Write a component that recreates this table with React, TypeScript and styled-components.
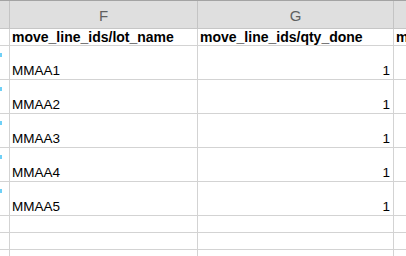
import styled, { createGlobalStyle } from "styled-components";

const GlobalStyle = createGlobalStyle`
  html, body {
    margin: 0;
    padding: 0;
    background: #ffffff;
    overflow: hidden;
  }
  body {
    font-family: "Liberation Sans", Arial, sans-serif;
  }
`;

const COLUMNS = "9px 187px 195px 40px";

interface Row {
  lot: string;
  qty: number;
}

const rows: Row[] = [
  { lot: "MMAA1", qty: 1 },
  { lot: "MMAA2", qty: 1 },
  { lot: "MMAA3", qty: 1 },
  { lot: "MMAA4", qty: 1 },
  { lot: "MMAA5", qty: 1 },
];

export default function App() {
  return (
    <Sheet>
      <GlobalStyle />
      <ColumnBar>
        <LetterCell />
        <LetterCell>F</LetterCell>
        <LetterCell>G</LetterCell>
        <LetterCell />
      </ColumnBar>
      <Grid>
        <RowHead />
        <HeadCell>move_line_ids/lot_name</HeadCell>
        <HeadCell>move_line_ids/qty_done</HeadCell>
        <HeadCell>m</HeadCell>

        {rows.map((r) => (
          <RowGroup key={r.lot}>
            <RowHead $tall>
              <Marker />
            </RowHead>
            <Cell $tall>{r.lot}</Cell>
            <Cell $tall $num>
              {r.qty}
            </Cell>
            <Cell $tall />
          </RowGroup>
        ))}

        {[0, 1, 2].map((i) => (
          <RowGroup key={i}>
            <RowHead />
            <Cell />
            <Cell />
            <Cell />
          </RowGroup>
        ))}
      </Grid>
    </Sheet>
  );
}

const Sheet = styled.div`
  width: 406px;
  height: 256px;
  overflow: hidden;
  background: #ffffff;
`;

const ColumnBar = styled.div`
  display: grid;
  grid-template-columns: ${COLUMNS};
  column-gap: 1px;
  height: 27px;
  background: #c4c4c4;
  border-top: 1px solid #a3a3a3;
  border-bottom: 1px solid #c6c6c6;
`;

const LetterCell = styled.div`
  background: #dfdfdf;
  display: flex;
  align-items: center;
  justify-content: center;
  color: #5f5f5f;
  font-size: 15px;
  padding-top: 1px;
`;

const Grid = styled.div`
  display: grid;
  grid-template-columns: ${COLUMNS};
  gap: 1px;
  background: #d3d3d3;
`;

const RowGroup = styled.div`
  display: contents;
`;

const RowHead = styled.div<{ $tall?: boolean }>`
  position: relative;
  background: #ffffff;
  height: ${(p) => (p.$tall ? "33px" : "16px")};
`;

const Marker = styled.span`
  position: absolute;
  left: 0;
  top: 7px;
  width: 2px;
  height: 4px;
  background: #6fd0f7;
`;

const HeadCell = styled.div`
  background: #ffffff;
  height: 16px;
  padding-left: 2px;
  font-size: 14px;
  font-weight: 700;
  line-height: 17px;
  color: #000000;
  white-space: nowrap;
  overflow: hidden;
`;

const Cell = styled.div<{ $tall?: boolean; $num?: boolean }>`
  background: #ffffff;
  height: ${(p) => (p.$tall ? "33px" : "16px")};
  display: flex;
  align-items: flex-end;
  justify-content: ${(p) => (p.$num ? "flex-end" : "flex-start")};
  padding: 0 3px 0 2px;
  font-size: 13.5px;
  line-height: 16px;
  color: #000000;
  white-space: nowrap;
  overflow: hidden;
`;
